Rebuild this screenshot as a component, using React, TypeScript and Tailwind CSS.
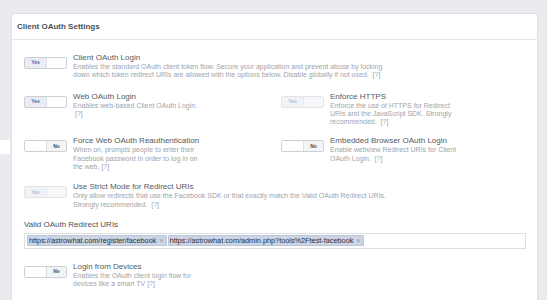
import React from 'react';

type ToggleState = 'yes' | 'no' | 'yes-disabled';

const Toggle: React.FC<{ state: ToggleState }> = ({ state }) => {
  if (state === 'no') {
    return (
      <div className="mt-[4px] flex h-[12px] w-[43px] shrink-0 overflow-hidden rounded-[2px] border border-[#ccd0d5] bg-white">
        <div className="w-[21px] bg-white" />
        <div className="flex flex-1 items-center justify-center border-l border-[#dddfe2] bg-[#f3f4f6] text-[5px] font-bold text-[#4b4f56]">
          No
        </div>
      </div>
    );
  }
  const disabled = state === 'yes-disabled';
  return (
    <div
      className={`mt-[4px] flex h-[12px] w-[43px] shrink-0 overflow-hidden rounded-[2px] border ${
        disabled ? 'border-[#e3e5e9]' : 'border-[#ccd0d5]'
      }`}
    >
      <div
        className={`flex w-[21px] items-center justify-center text-[5px] font-bold ${
          disabled ? 'bg-[#f1f3f6] text-[#a9bcdb]' : 'bg-[#e9edf3] text-[#4267b2]'
        }`}
      >
        Yes
      </div>
      <div
        className={`flex-1 border-l ${disabled ? 'border-[#e6e8ec] bg-[#f6f7f9]' : 'border-[#dddfe2] bg-white'}`}
      />
    </div>
  );
};

const Setting: React.FC<{ state: ToggleState; title: string; lines: string[] }> = ({ state, title, lines }) => (
  <div className="flex items-start">
    <Toggle state={state} />
    <div className="ml-[6px] whitespace-nowrap">
      <div className="text-[8px] leading-[10px] text-[#555a61]">{title}</div>
      {lines.map((line, i) => (
        <div key={i} className="text-[7px] leading-[8.3px] text-[#a0a4aa]">
          {line}
        </div>
      ))}
    </div>
  </div>
);

const Tag: React.FC<{ label: string }> = ({ label }) => (
  <div className="flex h-[11px] items-center rounded-[1px] border border-[#bcc6da] bg-[#cdd5e5] pl-[1px] pr-[2px] text-[7.3px] leading-[9px] text-[#2b2f36]">
    <span>{label}</span>
    <span className="ml-[3px] text-[#9098a6]">×</span>
  </div>
);

export default function App() {
  return (
    <div
      className="relative h-[300px] w-full overflow-hidden bg-[#e9ebee] pl-[11px] pr-[9px] pt-[13px]"
      style={{ fontFamily: '"Liberation Sans", Arial, sans-serif' }}
    >
      <div className="absolute left-0 top-[140px] h-[14px] w-[10px] bg-white" />
      <div className="h-[300px] rounded-[3px] border border-[#dddfe2] bg-white">
        <div className="flex h-[26px] items-center border-b border-[#e5e6e9] pl-[5px] text-[8px] font-bold text-[#4b4f56]">
          Client OAuth Settings
        </div>

        <div className="pl-[12px] pt-[13px]">
          <Setting
            state="yes"
            title="Client OAuth Login"
            lines={[
              'Enables the standard OAuth client token flow. Secure your application and prevent abuse by locking',
              'down which token redirect URIs are allowed with the options below. Disable globally if not used.\u00a0\u00a0[?]',
            ]}
          />

          <div className="mt-[12px] grid grid-cols-[257px_1fr]">
            <Setting
              state="yes"
              title="Web OAuth Login"
              lines={['Enables web-based Client OAuth Login.', '\u00a0[?]']}
            />
            <Setting
              state="yes-disabled"
              title="Enforce HTTPS"
              lines={[
                'Enforce the use of HTTPS for Redirect',
                'URIs and the JavaScript SDK. Strongly',
                'recommended.\u00a0\u00a0[?]',
              ]}
            />
          </div>

          <div className="mt-[10px] grid grid-cols-[257px_1fr]">
            <Setting
              state="no"
              title="Force Web OAuth Reauthentication"
              lines={[
                'When on, prompts people to enter their',
                'Facebook password in order to log in on',
                'the web.\u00a0[?]',
              ]}
            />
            <Setting
              state="no"
              title="Embedded Browser OAuth Login"
              lines={['Enable webview Redirect URIs for Client', 'OAuth Login.\u00a0\u00a0[?]']}
            />
          </div>

          <div className="mt-[11px]">
            <Setting
              state="yes-disabled"
              title="Use Strict Mode for Redirect URIs"
              lines={[
                'Only allow redirects that use the Facebook SDK or that exactly match the Valid OAuth Redirect URIs.',
                'Strongly recommended.\u00a0\u00a0[?]',
              ]}
            />
          </div>

          <div className="mt-[11px] text-[8px] leading-[10px] text-[#4b4f56]">Valid OAuth Redirect URIs</div>
          <div className="mr-[11px] mt-[3px] flex h-[16px] items-center gap-[1px] border border-[#dddfe2] bg-white pl-[2px]">
            <Tag label="https://astrowhat.com/register/facebook" />
            <Tag label="https://astrowhat.com/admin.php?tools%2Ftest-facebook" />
          </div>

          <div className="mt-[13px]">
            <Setting
              state="no"
              title="Login from Devices"
              lines={['Enables the OAuth client login flow for', 'devices like a smart TV [?]']}
            />
          </div>
        </div>
      </div>
    </div>
  );
}
